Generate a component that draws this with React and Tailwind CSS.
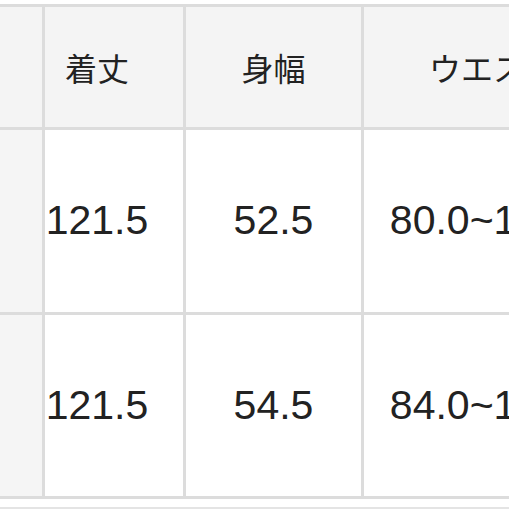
export default function App() {
  const jp = { fontFamily: '"Noto Sans CJK JP", "Noto Sans", sans-serif' };
  const num = { fontFamily: '"Liberation Sans", Arial, sans-serif' };
  const rows = [
    ["121.5", "52.5", "80.0~100.0"],
    ["121.5", "54.5", "84.0~104.0"],
  ];
  return (
    <div className="w-[509px] h-[509px] overflow-hidden bg-white text-[#222]">
      <div className="pt-[4px]">
        <div className="grid grid-cols-[42px_138px_175px_258px] grid-rows-[120px_182px_181px] gap-[3px] bg-[#dcdcdc] py-[3px] w-max">
          <div className="bg-[#f4f4f4]" />
          <div className="bg-[#f4f4f4] flex items-center justify-center pr-[34px] text-[32px]" style={jp}>着丈</div>
          <div className="bg-[#f4f4f4] flex items-center justify-center text-[32px]" style={jp}>身幅</div>
          <div className="bg-[#f4f4f4] flex items-center justify-center text-[32px] whitespace-nowrap" style={jp}>ウエスト</div>
          {rows.map((r, i) => (
            <div key={i} className="contents">
              <div className="bg-[#f5f5f5]" />
              <div className="bg-white flex items-center justify-center pr-[34px] text-[41px]" style={num}>{r[0]}</div>
              <div className="bg-white flex items-center justify-center text-[41px]" style={num}>{r[1]}</div>
              <div className="bg-white flex items-center justify-center text-[41px] whitespace-nowrap" style={num}>{r[2]}</div>
            </div>
          ))}
        </div>
        <div className="h-[8px] bg-white" />
        <div className="h-[2px] bg-[#e4e4e4]" />
      </div>
    </div>
  );
}
